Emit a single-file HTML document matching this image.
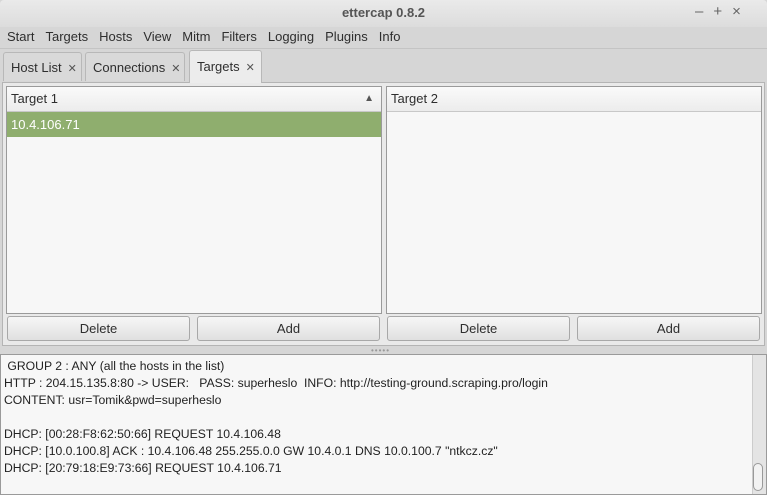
<!DOCTYPE html><html><head><style>
body{margin:0;width:767px;height:495px;background:#d6d6d6;font-family:"Liberation Sans","DejaVu Sans",sans-serif;font-size:13px;color:#2e2e2e;position:relative;overflow:hidden}
.a{position:absolute}
.title{left:0;top:0;width:767px;height:27px;background:linear-gradient(#eaeaea,#dcdcdc);border-top-left-radius:4px;border-top-right-radius:4px}
.menu span{margin-right:11px}
.tab{top:52px;height:29px;background:#d9d9d9;border:1px solid #b8b8b8;border-bottom:none;border-radius:3px 3px 0 0;line-height:29px;padding-left:7px;box-sizing:border-box}
.x{font-size:11px;color:#555;margin-left:6px}
.panel{background:#f7f7f7;border:1px solid #9a9a9a;box-sizing:border-box}
.hdr{height:24px;border-bottom:1px solid #c8c8c8;background:linear-gradient(#fafafa,#ececec);line-height:24px;padding-left:4px}
.btn{top:316px;height:25px;border:1px solid #a8a8a8;border-radius:3px;background:linear-gradient(#f6f6f6,#e0e0e0);box-sizing:border-box;text-align:center;line-height:23px}
.log div{height:17px;line-height:17px;white-space:pre}
</style></head><body>
<div class="a title"></div>
<div class="a" style="left:0;top:5px;width:767px;text-align:center;font-weight:bold;color:#555;font-size:13px">ettercap 0.8.2</div>
<div class="a" style="left:695px;top:3px;color:#666;font-size:15px;letter-spacing:10px">–+×</div>
<div class="a menu" style="left:7px;top:28px;line-height:18px"><span>Start</span><span>Targets</span><span>Hosts</span><span>View</span><span>Mitm</span><span>Filters</span><span>Logging</span><span>Plugins</span><span>Info</span></div>
<div class="a" style="left:0;top:48px;width:767px;height:1px;background:#c4c4c4"></div>
<div class="a tab" style="left:3px;width:79px">Host List<span class="x">✕</span></div>
<div class="a tab" style="left:85px;width:100px">Connections<span class="x">✕</span></div>
<div class="a tab" style="left:189px;width:73px;top:50px;height:33px;background:#ececec;line-height:31px;z-index:2">Targets<span class="x">✕</span></div>
<div class="a" style="left:2px;top:82px;width:763px;height:264px;background:#e9e9e9;border:1px solid #b4b4b4;box-sizing:border-box"></div>
<div class="a panel" style="left:6px;top:86px;width:376px;height:228px">
<div class="hdr">Target 1<span style="position:absolute;right:7px;font-size:10px;color:#555">▲</span></div>
<div style="height:25px;background:#8fae6e;color:#fff;line-height:25px;padding-left:4px">10.4.106.71</div></div>
<div class="a panel" style="left:386px;top:86px;width:376px;height:228px"><div class="hdr">Target 2</div></div>
<div class="a btn" style="left:7px;width:183px">Delete</div>
<div class="a btn" style="left:197px;width:183px">Add</div>
<div class="a btn" style="left:387px;width:183px">Delete</div>
<div class="a btn" style="left:577px;width:183px">Add</div>
<div class="a" style="left:371px;top:346px;font-size:8px;color:#999;letter-spacing:1px">•••••</div>
<div class="a" style="left:0;top:354px;width:767px;height:141px;background:#f7f7f7;border:1px solid #9a9a9a;box-sizing:border-box"></div>
<div class="a" style="left:752px;top:355px;width:13px;height:139px;background:#e4e4e4;border-left:1px solid #ccc"></div>
<div class="a" style="left:753px;top:463px;width:10px;height:28px;border:1px solid #999;border-radius:5px;background:#f2f2f2;box-sizing:border-box"></div>
<div class="a log" style="left:4px;top:358px;font-size:12.2px;color:#222">
<div> GROUP 2 : ANY (all the hosts in the list)</div>
<div>HTTP : 204.15.135.8:80 -&gt; USER:   PASS: superheslo  INFO: http://testing-ground.scraping.pro/login</div>
<div>CONTENT: usr=Tomik&amp;pwd=superheslo</div>
<div></div>
<div>DHCP: [00:28:F8:62:50:66] REQUEST 10.4.106.48</div>
<div>DHCP: [10.0.100.8] ACK : 10.4.106.48 255.255.0.0 GW 10.4.0.1 DNS 10.0.100.7 "ntkcz.cz"</div>
<div>DHCP: [20:79:18:E9:73:66] REQUEST 10.4.106.71</div>
</div>
</body></html>
